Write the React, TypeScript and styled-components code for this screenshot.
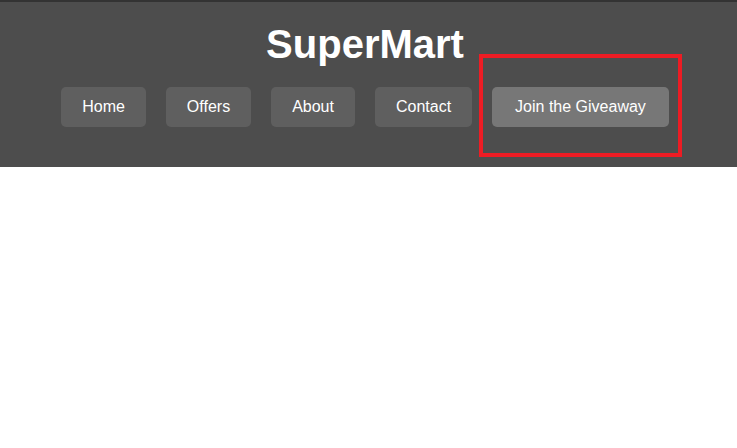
import { ReactElement } from 'react';
import styled, { createGlobalStyle } from 'styled-components';

const GlobalStyle = createGlobalStyle`
  body {
    margin: 0;
    background: #ffffff;
    font-family: 'Liberation Sans', Arial, sans-serif;
  }
`;

const links = ['Home', 'Offers', 'About', 'Contact'];

const App = (): ReactElement => {
  return (
    <>
      <GlobalStyle />
      <StyledHeader>
        <StyledTitle>SuperMart</StyledTitle>
        <StyledNav>
          {links.map((link) => (
            <StyledNavButton key={link}>{link}</StyledNavButton>
          ))}
          <StyledHighlightWrap>
            <StyledNavButton $highlight>Join the Giveaway</StyledNavButton>
            <StyledMarker />
          </StyledHighlightWrap>
        </StyledNav>
      </StyledHeader>
    </>
  );
};

export default App;

const StyledHeader = styled.header`
  background-color: #4d4d4d;
  border-top: 2px solid #333333;
  padding: 19px 7px 40px 0;
  display: flex;
  flex-direction: column;
  align-items: center;
`;

const StyledTitle = styled.h1`
  margin: 0 0 20px;
  font-size: 40px;
  font-weight: 700;
  line-height: 46px;
  color: #ffffff;
`;

const StyledNav = styled.nav`
  display: flex;
  gap: 20px;
`;

const StyledHighlightWrap = styled.div`
  position: relative;
`;

const StyledNavButton = styled.button<{ $highlight?: boolean }>`
  height: 40px;
  padding: 0 ${(props) => (props.$highlight ? '23px' : '21px')};
  border: none;
  border-radius: 5px;
  background-color: ${(props) => (props.$highlight ? '#777777' : '#5f5f5f')};
  color: #ffffff;
  font-family: 'Liberation Sans', Arial, sans-serif;
  font-size: 16px;
  cursor: pointer;
`;

const StyledMarker = styled.span`
  position: absolute;
  left: -13px;
  right: -13px;
  top: -33px;
  bottom: -30px;
  border: 4px solid #ed1c24;
  pointer-events: none;
`;
